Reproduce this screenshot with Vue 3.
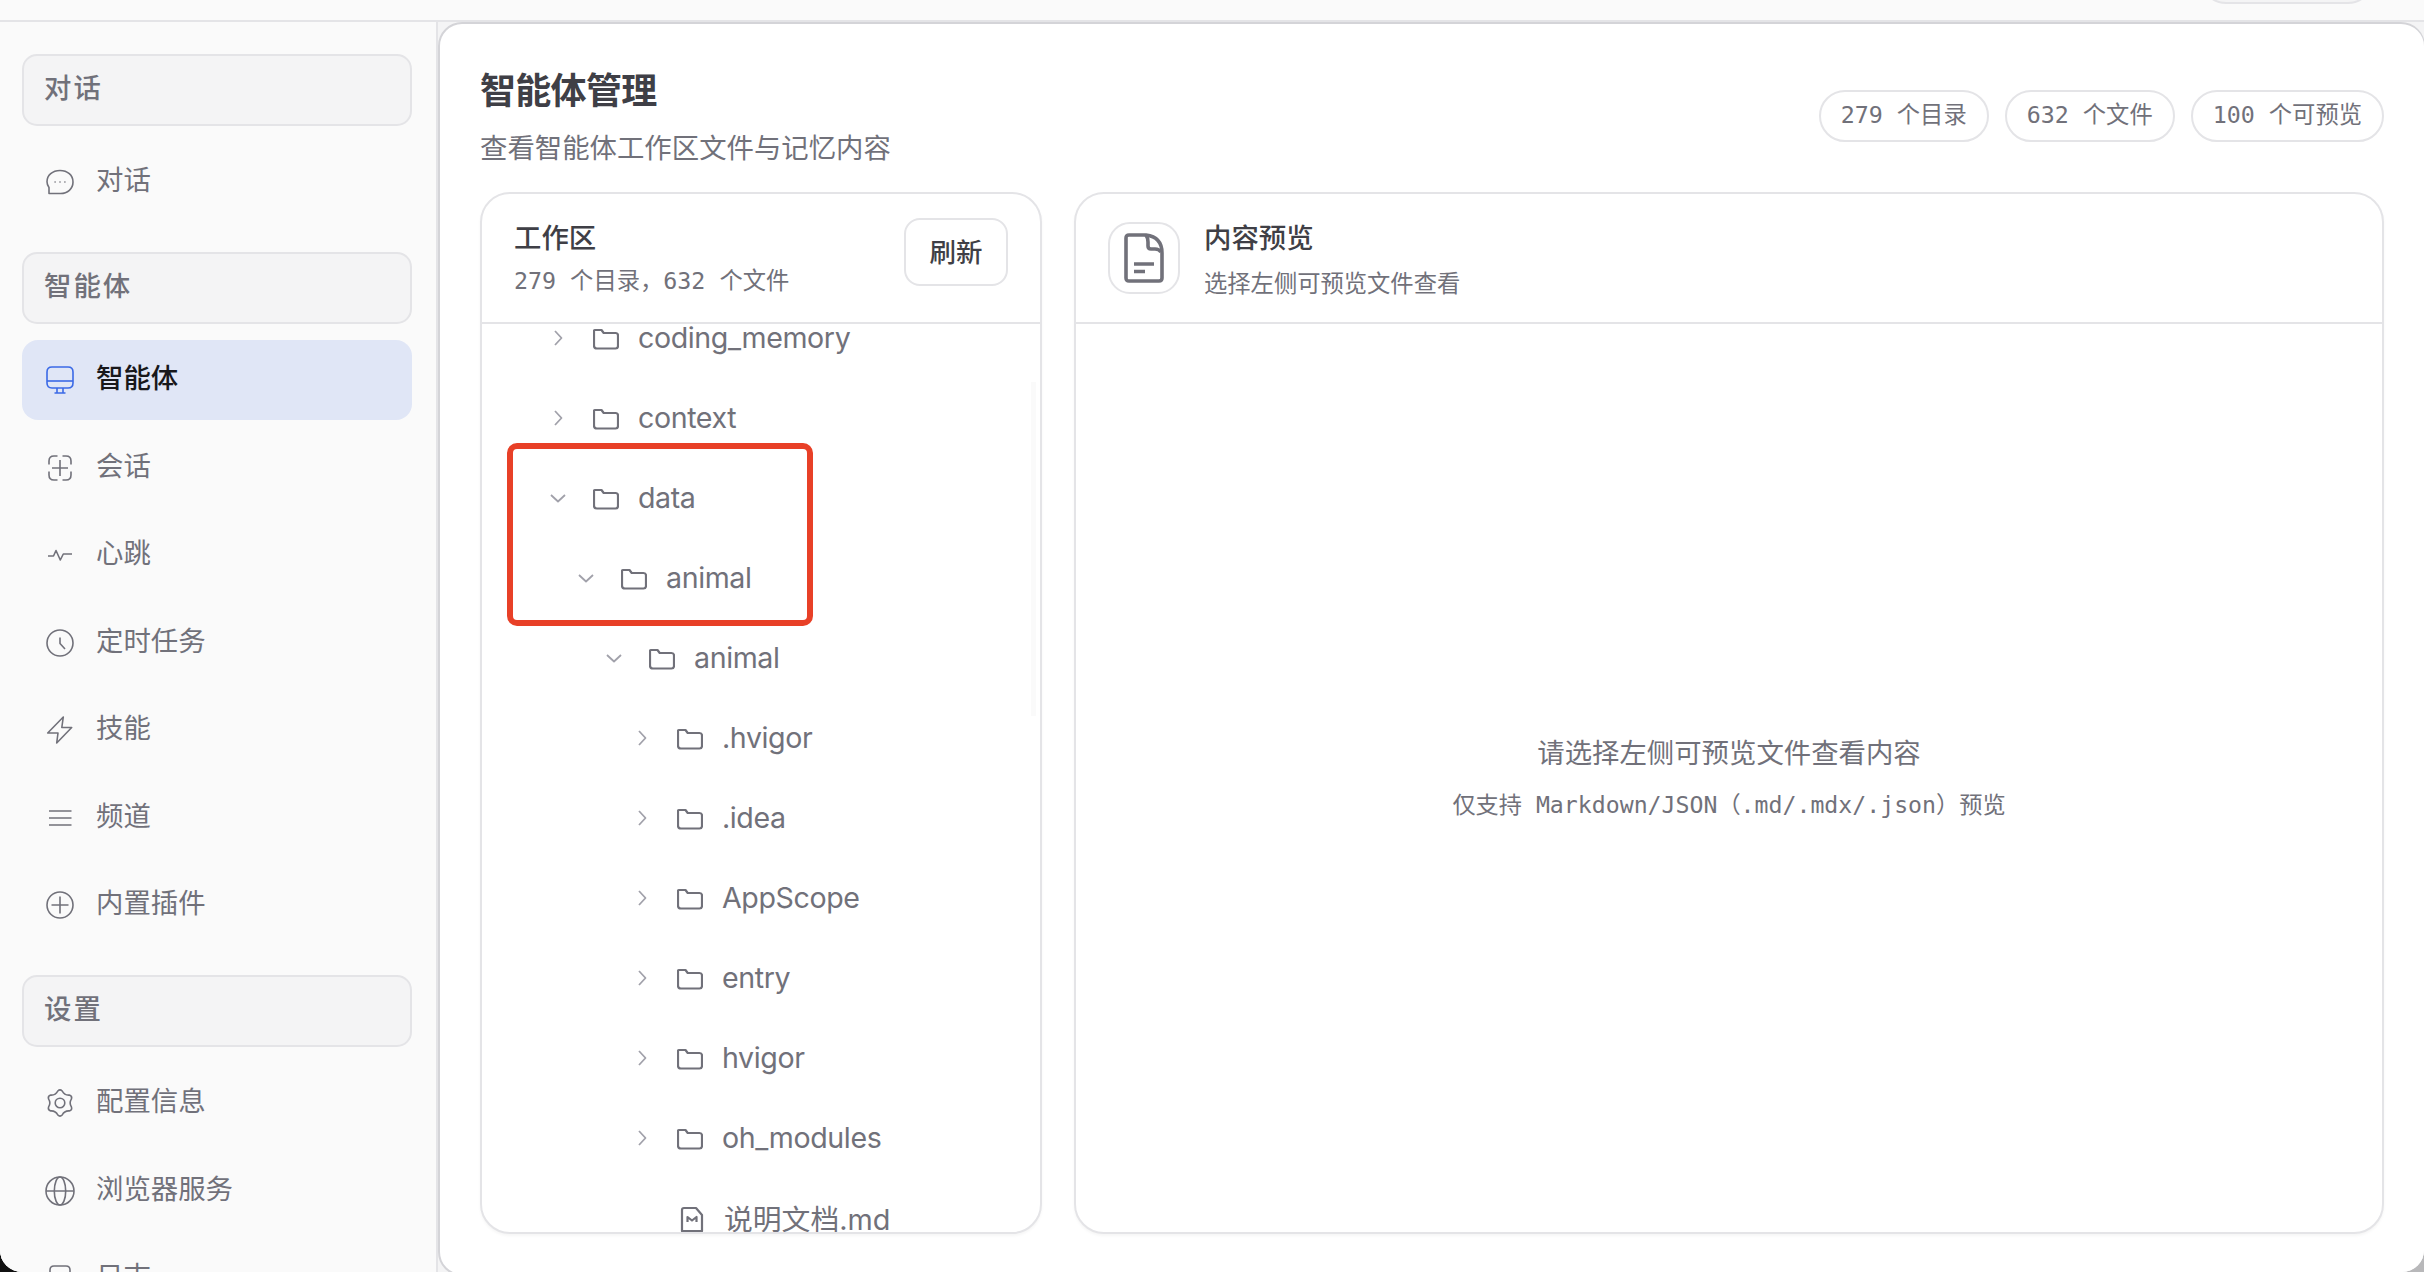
<template>
  <div class="window">
    <header class="topbar">
      <div class="top-pill"></div>
    </header>

    <div class="body">
      <nav class="sidebar">
        <section class="group" v-for="group in groups" :key="group.title">
          <div class="group-title">{{ group.title }}</div>
          <div class="nav-list">
            <a class="nav-item" v-for="item in group.items" :key="item.label" :class="{ active: item.label === current }" @click="current = item.label">
              <svg class="nav-icon" viewBox="0 0 28 28">
                <path v-for="d in icons[item.icon]" :key="d" :d="d" />
              </svg>
              <span>{{ item.label }}</span>
            </a>
          </div>
        </section>
      </nav>

      <main class="main">
        <div class="page-head">
          <div>
            <h1>智能体管理</h1>
            <p class="page-sub">查看智能体工作区文件与记忆内容</p>
          </div>
          <div class="pills">
            <span class="pill" v-for="stat in stats" :key="stat">{{ stat }}</span>
          </div>
        </div>

        <div class="columns">
          <section class="card tree-card">
            <div class="card-head">
              <div class="head-text">
                <h2>工作区</h2>
                <p class="mono">279 个目录，632 个文件</p>
              </div>
              <button>刷新</button>
            </div>
            <div class="tree">
              <div class="row" v-for="(node, index) in nodes" :key="index" :class="node.type" :style="{ paddingLeft: 64 + node.level * 28 + 'px' }">
                <svg class="chevron" viewBox="0 0 20 20">
                  <path v-if="node.type === 'closed'" d="M7 3l6.5 7L7 17" />
                  <path v-if="node.type === 'open'" d="M3 7l7 6.5L17 7" />
                </svg>
                <svg v-if="node.type !== 'file'" class="folder-icon" viewBox="0 0 26 22">
                  <path d="M2 2h6.5l2.2 3H22.500q2.500 0 2.500 2.500v10.500q0 2.500-2.500 2.500H4q-3 0-3-3V3q0-1 1-1z" />
                </svg>
                <svg v-else class="file-icon" viewBox="0 0 28 28">
                  <path d="M4 26V5q0-2 2-2h12l6 7v16z" />
                  <path d="M9.500 17v-5l4.500 3.500 4.500-3.500v5" />
                </svg>
                <span>{{ node.name }}</span>
              </div>
              <div class="thumb"></div>
            </div>
            <div class="highlight"></div>
          </section>

          <section class="card preview-card">
            <div class="card-head preview-head">
              <div class="doc-icon">
                <svg viewBox="0 0 40 50">
                  <path d="M5 2h17q16 2 16 18v25q0 3-3 3H5q-3 0-3-3V5q0-3 3-3z" />
                  <path d="M22 2q2 3 2 7v4q0 3 3 3h4q4 0 6 3" />
                  <path d="M10 31h20M10 38.500h11" />
                </svg>
              </div>
              <div class="head-text">
                <h2>内容预览</h2>
                <p>选择左侧可预览文件查看</p>
              </div>
            </div>
            <div class="empty">
              <p class="empty-title">请选择左侧可预览文件查看内容</p>
              <p class="mono">仅支持 Markdown/JSON（.md/.mdx/.json）预览</p>
            </div>
          </section>
        </div>
      </main>
    </div>
  </div>
</template>

<script setup>
import { ref } from "vue";

// sidebar
const current = ref("智能体")

const groups = [
  { title: "对话", items: [{ label: "对话", icon: "chat" }] },
  {
    title: "智能体",
    items: [
      { label: "智能体", icon: "monitor" },
      { label: "会话", icon: "session" },
      { label: "心跳", icon: "pulse" },
      { label: "定时任务", icon: "clock" },
      { label: "技能", icon: "bolt" },
      { label: "频道", icon: "lines" },
      { label: "内置插件", icon: "plus" },
    ],
  },
  {
    title: "设置",
    items: [
      { label: "配置信息", icon: "gear" },
      { label: "浏览器服务", icon: "globe" },
      { label: "日志", icon: "log" },
    ],
  },
]

const circle = "M1 14a13 13 0 1 0 26 0a13 13 0 1 0-26 0z"

const icons = {
  chat: [
    "M3 25.5v-6C1.500 17.600 1 15.800 1 13.800C1 7.200 6.500 2.500 14 2.500S27 7.200 27 14S21.500 25.500 14.500 25.500z",
    "M8.500 14h1.200M13.400 14h1.200M18.300 14h1.200",
  ],
  monitor: [
    "M6 1h16q5 0 5 5v11q0 5-5 5H6q-5 0-5-5V6q0-5 5-5z",
    "M1 15h26",
    "M11 22v5M17 22v5M8.500 27h11",
  ],
  session: [
    "M11.500 2H8q-5 0-5 5v3.500M16.500 2H20q5 0 5 5v3.500M3 17.500V21q0 5 5 5h3.500M25 17.500V21q0 5-5 5h-3.500",
    "M14 6v16M6 14h16",
  ],
  pulse: ["M2 15h5.500l2.500-5.500 4.300 9.500 3-6H26"],
  clock: [circle, "M14 8.500V14.500l5 5.500"],
  bolt: ["M17.300 1L1.700 17H12l-1.300 10L25.700 11.500H15.800z"],
  lines: ["M3 7h22.500M3 14h22.500M3 21h22.500"],
  plus: [circle, "M14 5.500v17M5.500 14h17"],
  gear: [
    "M11.800 2Q14-.2 16.200 2Q18.400 6.400 23.300 6.100Q26.300 6.900 25.500 9.900Q22.800 14 25.500 18.100Q26.300 21.100 23.300 21.900Q18.400 21.600 16.200 26Q14 28.200 11.800 26Q9.600 21.600 4.700 21.900Q1.700 21.100 2.500 18.100Q5.200 14 2.500 9.900Q1.700 6.900 4.700 6.100Q9.600 6.400 11.800 2z",
    "M9.200 14a4.800 4.800 0 1 0 9.600 0a4.800 4.800 0 1 0-9.600 0z",
  ],
  globe: [
    "M0 14a14 14 0 1 0 28 0a14 14 0 1 0-28 0z",
    "M8.300 14a5.700 14 0 1 0 11.400 0a5.700 14 0 1 0-11.400 0z",
    "M0 14h28",
  ],
  log: ["M8 2h12q4 0 4 4v16q0 4-4 4H8q-4 0-4-4V6q0-4 4-4z"],
}

// content
const stats = ["279 个目录", "632 个文件", "100 个可预览"]

const nodes = [
  { name: "coding_memory", level: 0, type: "closed" },
  { name: "context", level: 0, type: "closed" },
  { name: "data", level: 0, type: "open" },
  { name: "animal", level: 1, type: "open" },
  { name: "animal", level: 2, type: "open" },
  { name: ".hvigor", level: 3, type: "closed" },
  { name: ".idea", level: 3, type: "closed" },
  { name: "AppScope", level: 3, type: "closed" },
  { name: "entry", level: 3, type: "closed" },
  { name: "hvigor", level: 3, type: "closed" },
  { name: "oh_modules", level: 3, type: "closed" },
  { name: "说明文档.md", level: 3, type: "file" },
]
</script>

<style>
body {
  background: linear-gradient(90deg, #111 50%, #b8b8ba 50%);
}
</style>

<style scoped>
* {
  box-sizing: border-box;
}
h1, h2, p {
  margin: 0;
}
svg {
  display: block;
  flex: none;
  fill: none;
  stroke: currentColor;
  stroke-linejoin: round;
}
.window {
  height: 1272px;
  display: flex;
  flex-direction: column;
  overflow: hidden;
  background: #fafafa;
  border-radius: 0 0 22px 22px;
  color: #71717a;
  font-family: "Inter", "Noto Sans CJK SC", sans-serif;
  font-size: 27.4px;
}
.topbar {
  flex: none;
  height: 22px;
  display: flex;
  justify-content: flex-end;
  align-items: flex-start;
  padding-right: 50px;
  border-bottom: 2px solid #e4e4e7;
  overflow: hidden;
}
.top-pill {
  width: 174px;
  height: 52px;
  margin-top: -48px;
  border: 2px solid #e4e4e7;
  border-radius: 26px;
  background: #f4f4f5;
}
.body {
  flex: 1;
  min-height: 0;
  display: flex;
  background: #f4f4f5;
}

/* sidebar */
.sidebar {
  flex: none;
  width: 438px;
  padding: 32px 24px 0 22px;
  display: flex;
  flex-direction: column;
  gap: 30px;
  background: #fafafa;
  border-right: 2px solid #e4e4e7;
  overflow: hidden;
  font-family: "Noto Sans CJK SC", sans-serif;
}
.group {
  flex: none;
}
.group-title {
  height: 72px;
  padding: 0 20px 8px;
  display: flex;
  align-items: center;
  border: 2px solid #e4e4e7;
  border-radius: 15px;
  background: #f4f4f5;
  font-weight: 500;
  letter-spacing: 2px;
}
.nav-list {
  margin-top: 16px;
  display: flex;
  flex-direction: column;
  gap: 7.5px;
}
.nav-item {
  height: 80px;
  padding-left: 24px;
  display: flex;
  align-items: center;
  gap: 22px;
  border-radius: 16px;
  cursor: pointer;
}
.nav-item span {
  padding-bottom: 8px;
}
.nav-icon {
  width: 28px;
  height: 28px;
  stroke-width: 1.6;
  overflow: visible;
}
.active {
  background: #e0e6f6;
  color: #18181b;
  font-weight: 500;
}
.active .nav-icon {
  color: #3b6ae6;
}

/* main */
.main {
  flex: 1;
  min-width: 0;
  height: 1254px;
  margin-right: -1px;
  padding: 0 40px;
  display: flex;
  flex-direction: column;
  background: #fff;
  border: 2px solid #d4d4d8;
  border-right-width: 1px;
  border-radius: 24px;
}
.page-head {
  flex: none;
  height: 168px;
  padding-top: 45px;
  display: flex;
  justify-content: space-between;
}
h1 {
  font-size: 36px;
  line-height: 44px;
  letter-spacing: -0.7px;
  color: #3f3f46;
  font-weight: 700;
}
.page-sub {
  margin-top: 15px;
  line-height: 40px;
}
.pills {
  display: flex;
  gap: 16px;
  padding-top: 21px;
}
.pill {
  height: 52px;
  padding: 0 20px 6px;
  display: flex;
  align-items: center;
  border: 2px solid #e4e4e7;
  border-radius: 26px;
  font-family: "DejaVu Sans Mono", "Noto Sans CJK SC", monospace;
  font-size: 23.3px;
}
.mono {
  font-family: "DejaVu Sans Mono", "Noto Sans CJK SC", monospace;
}
.columns {
  display: grid;
  grid-template-columns: 562px 1fr;
  grid-template-rows: minmax(0, 1fr);
  gap: 32px;
  flex: none;
  height: 1042px;
}
.card {
  position: relative;
  min-width: 0;
  display: flex;
  flex-direction: column;
  border: 2px solid #e4e4e7;
  border-radius: 30px;
  background: #fff;
  box-shadow: 0 2px 3px rgba(0, 0, 0, 0.04);
}
.card-head {
  flex: none;
  height: 130px;
  padding: 24px 32px 0;
  display: flex;
  justify-content: space-between;
  align-items: flex-start;
  border-bottom: 2px solid #e4e4e7;
}
h2 {
  font-size: 27.4px;
  line-height: 40px;
  font-weight: 500;
  color: #3f3f46;
}
.head-text p {
  margin-top: 5px;
  font-size: 23.3px;
  line-height: 36px;
}
.preview-head .head-text p {
  margin-top: 8px;
}
button {
  width: 104px;
  height: 68px;
  padding: 0 0 4px;
  border: 2px solid #e4e4e7;
  border-radius: 16px;
  background: #fff;
  color: #3f3f46;
  font-family: "Noto Sans CJK SC", sans-serif;
  font-size: 26.5px;
  font-weight: 500;
}
.preview-head {
  justify-content: flex-start;
  gap: 24px;
}
.doc-icon {
  width: 72px;
  height: 72px;
  margin-top: 4px;
  display: flex;
  align-items: center;
  justify-content: center;
  border: 2px solid #e4e4e7;
  border-radius: 22px;
}
.doc-icon svg {
  width: 40px;
  height: 50px;
  stroke-width: 3.6;
}
.tree {
  position: relative;
  flex: 1;
  min-height: 0;
  overflow: hidden;
  border-radius: 0 0 28px 28px;
}
.row {
  height: 80px;
  display: flex;
  align-items: center;
  font-size: 28.6px;
  letter-spacing: -0.4px;
}
/* the list is scrolled, so its first row is cut by the header */
.row:first-child {
  margin-top: -26px;
}
.row span {
  padding-bottom: 2px;
}
.row.file {
  font-size: 28.8px;
  letter-spacing: 0;
}
.chevron {
  width: 20px;
  height: 20px;
  margin: 0 25px 0 2px;
  stroke-width: 1.8;
  color: #a1a1aa;
}
.folder-icon {
  width: 26px;
  height: 22px;
  margin: 2px 19px 0 0;
  stroke-width: 2.2;
}
.file-icon {
  width: 28px;
  height: 28px;
  margin: 2px 18px 0 1px;
  stroke-width: 2.2;
}
.thumb {
  position: absolute;
  top: 58px;
  right: 4px;
  width: 5px;
  height: 334px;
  background: #fafafa;
}
.highlight {
  position: absolute;
  left: 25px;
  top: 249px;
  width: 306px;
  height: 183px;
  border: 6px solid #e84027;
  border-radius: 10px;
}
.empty {
  flex: 1;
  display: flex;
  flex-direction: column;
  align-items: center;
  justify-content: center;
  gap: 14px;
}
.empty-title {
  line-height: 40px;
}
.empty .mono {
  font-size: 23.2px;
  line-height: 36px;
}
</style>
